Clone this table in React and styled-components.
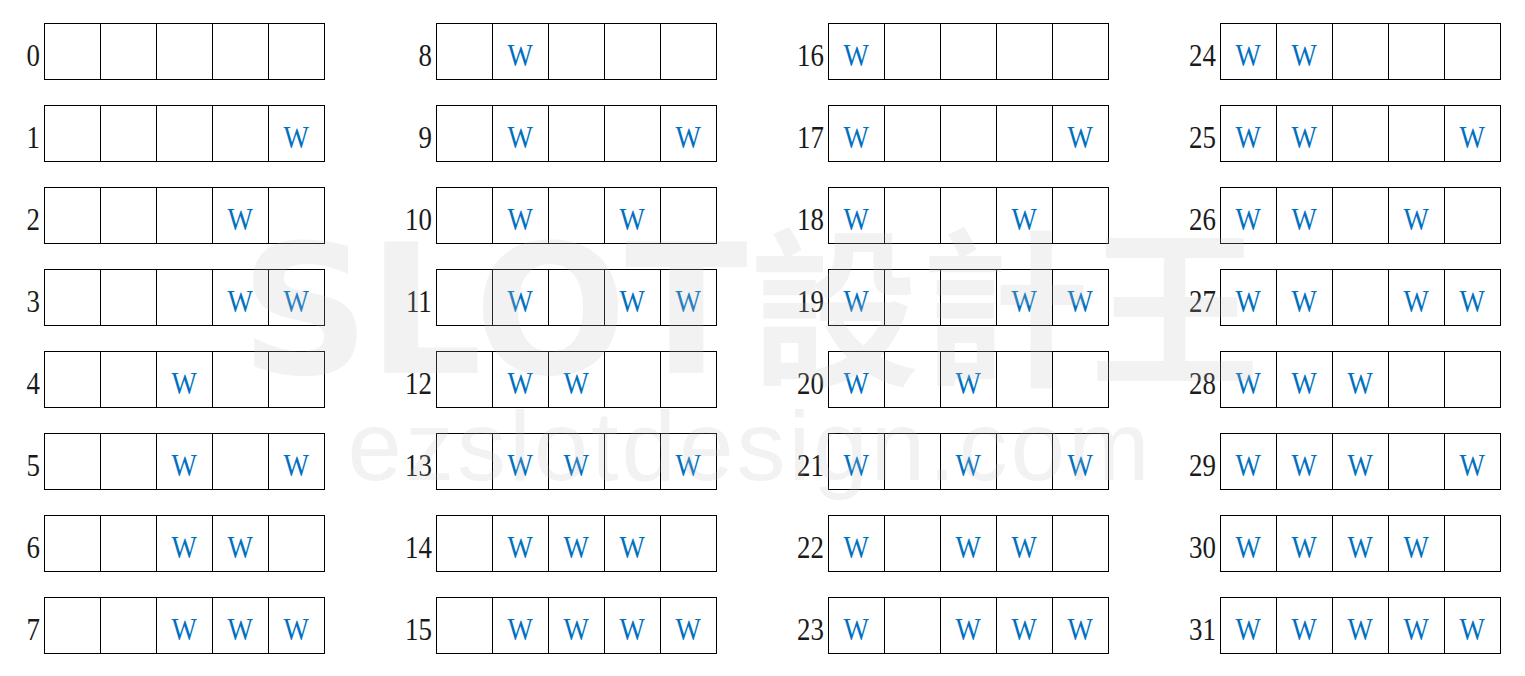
import React from 'react';
import styled, { createGlobalStyle } from 'styled-components';

const GlobalStyle = createGlobalStyle`
  html, body {
    margin: 0;
    padding: 0;
    background: #fff;
  }
  body {
    font-family: 'Liberation Serif', 'Times New Roman', serif;
  }
`;

// Whole page: four columns of paylines
const Page = styled.div`
  position: relative;
  width: 1525px;
  height: 676px;
  box-sizing: border-box;
  padding: 23px 0 0 4px;
  display: grid;
  grid-template-columns: repeat(4, 321px);
  column-gap: 71px;
  align-items: start;
  overflow: hidden;
`;

const Column = styled.div`
  display: flex;
  flex-direction: column;
  gap: 25px;
`;

const Row = styled.div`
  display: flex;
  align-items: center;
`;

const Label = styled.div`
  width: 40px;
  box-sizing: border-box;
  padding-right: 4px;
  text-align: right;
  font-size: 32px;
  color: #1a1a1a;
  line-height: 1;
`;

const Glyph = styled.span`
  display: inline-block;
  transform: translateY(3px) scaleX(0.84);
  transform-origin: ${(p) => (p.$origin === 'right' ? 'right center' : 'center')};
`;

const Strip = styled.div`
  display: flex;
  border: 1px solid #000;
  border-right: none;
  height: 55px;
`;

const Cell = styled.div`
  width: 56px;
  box-sizing: border-box;
  border-right: 1px solid #000;
  display: flex;
  align-items: center;
  justify-content: center;
  font-size: 32px;
  line-height: 1;
  color: #0070c0;
`;

// Faint watermark laid over the grid
const Watermark = styled.div`
  position: absolute;
  top: 0;
  left: 0;
  width: 1500px;
  padding-top: 214px;
  display: flex;
  flex-direction: column;
  align-items: center;
  pointer-events: none;
  color: rgba(190, 190, 190, 0.2);
`;

const Brand = styled.div`
  display: flex;
  align-items: baseline;
  line-height: 1;
  white-space: nowrap;
`;

const BrandLatin = styled.span`
  font-family: 'DejaVu Sans', sans-serif;
  font-weight: 700;
  font-size: 180px;
  letter-spacing: -2px;
`;

const BrandCjk = styled.span`
  font-family: 'Noto Sans CJK TC', 'Noto Sans CJK SC', sans-serif;
  font-weight: 700;
  font-size: 170px;
  margin-left: 4px;
`;

const Domain = styled.div`
  font-family: 'Liberation Sans', Arial, sans-serif;
  font-size: 98px;
  letter-spacing: 3px;
  line-height: 1;
  margin-top: -4px;
  white-space: nowrap;
`;

const lines = Array.from({ length: 32 }, (_, n) => n);

const Payline = ({ n }) => (
  <Row>
    <Label>
      <Glyph $origin="right">{n}</Glyph>
    </Label>
    <Strip>
      {[4, 3, 2, 1, 0].map((bit) => (
        <Cell key={bit}>{(n >> bit) & 1 ? <Glyph>W</Glyph> : null}</Cell>
      ))}
    </Strip>
  </Row>
);

export default function App() {
  return (
    <>
      <GlobalStyle />
      <Page>
        {[0, 1, 2, 3].map((c) => (
          <Column key={c}>
            {lines.slice(c * 8, c * 8 + 8).map((n) => (
              <Payline key={n} n={n} />
            ))}
          </Column>
        ))}
        <Watermark>
          <Brand>
            <BrandLatin>SLOT</BrandLatin>
            <BrandCjk>設計王</BrandCjk>
          </Brand>
          <Domain>ezslotdesign.com</Domain>
        </Watermark>
      </Page>
    </>
  );
}
